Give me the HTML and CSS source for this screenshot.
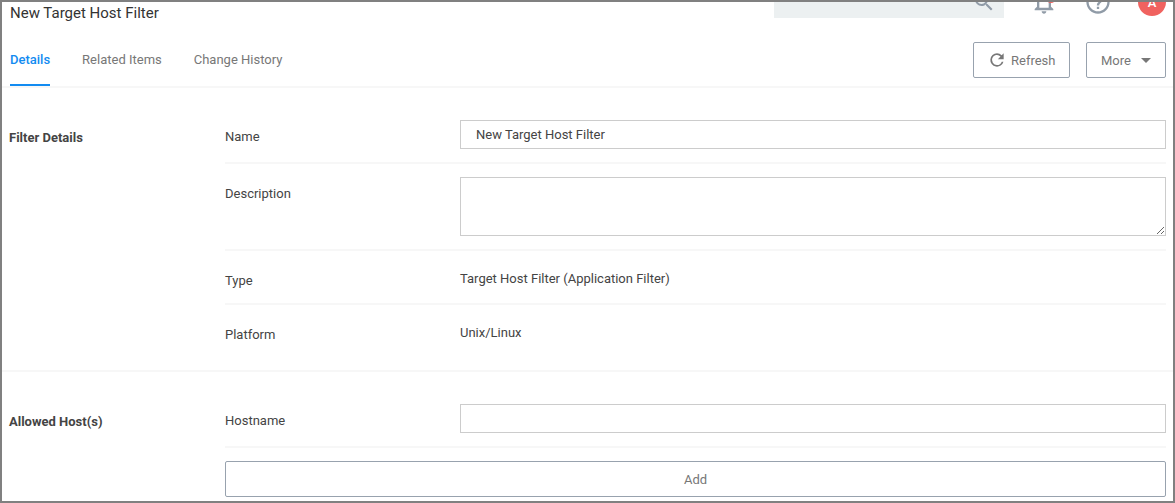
FILE: index.html
```
<!DOCTYPE html>
<html lang="en">
<head>
<meta charset="utf-8">
<title>New Target Host Filter</title>
<link rel="stylesheet" href="styles.css">
</head>
<body>
<div class="window">
  <header class="topbar">
    <h1 class="title">New Target Host Filter</h1>
    <div class="tools">
      <div class="search">
        <svg width="24" height="24" viewBox="0 0 24 24"><path d="M15.5 14h-.79l-.28-.27A6.47 6.47 0 0 0 16 9.5 6.5 6.5 0 1 0 9.5 16c1.61 0 3.09-.59 4.23-1.57l.27.28v.79l5 4.99L20.49 19l-4.99-5zm-6 0C7.01 14 5 11.99 5 9.5S7.01 5 9.5 5 14 7.01 14 9.5 11.99 14 9.5 14z"/></svg>
      </div>
      <div class="bell">
        <svg width="28" height="28" viewBox="0 0 24 24"><path d="M12 22c1.1 0 2-.9 2-2h-4c0 1.1.9 2 2 2zm6-6v-5c0-3.07-1.63-5.64-4.5-6.32V4c0-.83-.67-1.5-1.5-1.5s-1.5.67-1.5 1.5v.68C7.64 5.36 6 7.92 6 11v5l-2 2v1h16v-1l-2-2zm-2 1H8v-6c0-2.48 1.51-4.5 4-4.5s4 2.02 4 4.5v6z"/></svg>
        <span class="dot"></span>
      </div>
      <svg class="help" width="28" height="28" viewBox="0 0 24 24"><path d="M11 18h2v-2h-2v2zm1-16C6.48 2 2 6.48 2 12s4.48 10 10 10 10-4.48 10-10S17.52 2 12 2zm0 18c-4.41 0-8-3.59-8-8s3.59-8 8-8 8 3.59 8 8-3.59 8-8 8zm0-14c-2.21 0-4 1.79-4 4h2c0-1.1.9-2 2-2s2 .9 2 2c0 2-3 1.75-3 5h2c0-2.25 3-2.5 3-5 0-2.21-1.79-4-4-4z"/></svg>
      <span class="avatar">A</span>
    </div>
  </header>

  <div class="tabbar">
    <nav class="tabs">
      <a class="tab active">Details</a>
      <a class="tab">Related Items</a>
      <a class="tab">Change History</a>
    </nav>
    <div class="actions">
      <button class="btn refresh">
        <svg width="20" height="20" viewBox="0 0 24 24"><path d="M17.65 6.35A7.96 7.96 0 0 0 12 4a8 8 0 1 0 7.73 10h-2.08A5.99 5.99 0 0 1 12 18a6 6 0 1 1 4.22-10.22L13 11h7V4l-2.35 2.35z"/></svg>
        <span>Refresh</span>
      </button>
      <button class="btn more"><span>More</span><i class="caret"></i></button>
    </div>
  </div>

  <section class="section details">
    <h2 class="heading">Filter Details</h2>
    <div class="fields">
      <div class="row"><label class="label">Name</label><input class="input" type="text" value="New Target Host Filter"></div>
      <div class="row tall"><label class="label">Description</label><textarea class="input area"></textarea></div>
      <div class="row plain"><span class="label">Type</span><span class="value">Target Host Filter (Application Filter)</span></div>
      <div class="row plain last"><span class="label">Platform</span><span class="value">Unix/Linux</span></div>
    </div>
  </section>

  <section class="section hosts">
    <h2 class="heading">Allowed Host(s)</h2>
    <div class="fields">
      <div class="row"><label class="label">Hostname</label><input class="input" type="text"></div>
      <button class="btn add"><span>Add</span></button>
    </div>
  </section>
</div>
</body>
</html>
```
FILE: styles.css
```
* { box-sizing: border-box; }
body {
  margin: 0;
  font-family: Roboto, "Liberation Sans", sans-serif;
  font-size: 13px;
  line-height: 16px;
  color: #444;
}
.window {
  height: 503px;
  border: 2px solid #808080;
  background: #fff;
  overflow: hidden;
}
.topbar {
  display: flex;
  justify-content: space-between;
  height: 20px;
}
.title {
  margin: 2px 0 0 8px;
  font-size: 15px;
  line-height: 18px;
  font-weight: 400;
  color: #333;
}
.tools {
  display: flex;
  align-items: center;
  height: 32px;
  margin: -16px 7px 0 0;
  fill: #909ba7;
}
.search {
  display: flex;
  justify-content: flex-end;
  align-items: center;
  width: 230px;
  height: 32px;
  margin-right: 26px;
  padding-right: 8px;
  background: #ecf0f1;
}
.search svg { margin-bottom: 1px; }
.bell { position: relative; height: 28px; margin-right: 26px; }
.dot {
  position: absolute;
  right: 3px;
  top: 7px;
  width: 8px;
  height: 8px;
  border-radius: 50%;
  background: #f0625f;
}
.help { margin-right: 26px; }
.avatar {
  width: 28px;
  height: 28px;
  border-radius: 50%;
  background: #f0625f;
  color: #fff;
  font-size: 13px;
  font-weight: 500;
  line-height: 30px;
  text-align: center;
}
.tabbar {
  display: flex;
  justify-content: space-between;
  height: 66px;
  padding: 0 7px 0 8px;
  border-bottom: 2px solid #f7f7f7;
}
.tabs { display: flex; gap: 32px; }
.tab {
  height: 64px;
  padding-top: 30px;
  color: #777;
  border-bottom: 2px solid transparent;
}
.tab.active { color: #128bf1; border-color: #128bf1; font-weight: 500; }
.actions { display: flex; gap: 16px; padding-top: 20px; }
.btn {
  display: flex;
  align-items: center;
  height: 36px;
  padding: 0 14px;
  border: 1px solid #98a2ae;
  border-radius: 2px;
  background: #fff;
  font: inherit;
  color: #777;
}
.btn span { padding-top: 2px; }
.refresh { width: 97px; gap: 4px; padding: 0 13px; }
.refresh svg { fill: #777; }
.more { width: 80px; justify-content: space-between; }
.caret { border: 5px solid transparent; border-top-color: #777; border-bottom: 0; }
.section { display: flex; padding-right: 7px; }
.details { height: 284px; padding-top: 32px; border-bottom: 2px solid #f7f7f7; }
.hosts { padding-top: 32px; }
.heading {
  width: 223px;
  margin: 0;
  padding: 10px 0 0 7px;
  font-size: 13px;
  line-height: 16px;
  font-weight: 700;
}
.fields { flex: 1; }
.row {
  display: flex;
  height: 44px;
  margin-bottom: 13px;
  border-bottom: 2px solid #f7f7f7;
}
.label { width: 235px; padding-top: 9px; }
.input {
  flex: 1;
  height: 29px;
  padding: 0 15px;
  border: 1px solid #ccc;
  border-radius: 0;
  background: #fff;
  outline: 0;
  font: inherit;
  color: #444;
}
.tall { height: 74px; margin-bottom: 0; }
.area { height: 59px; resize: vertical; }
.plain { height: 54px; margin: 0; }
.plain .label { padding-top: 22px; }
.value { padding-top: 20px; }
.last { border: 0; }
.add { width: 100%; justify-content: center; }
```
